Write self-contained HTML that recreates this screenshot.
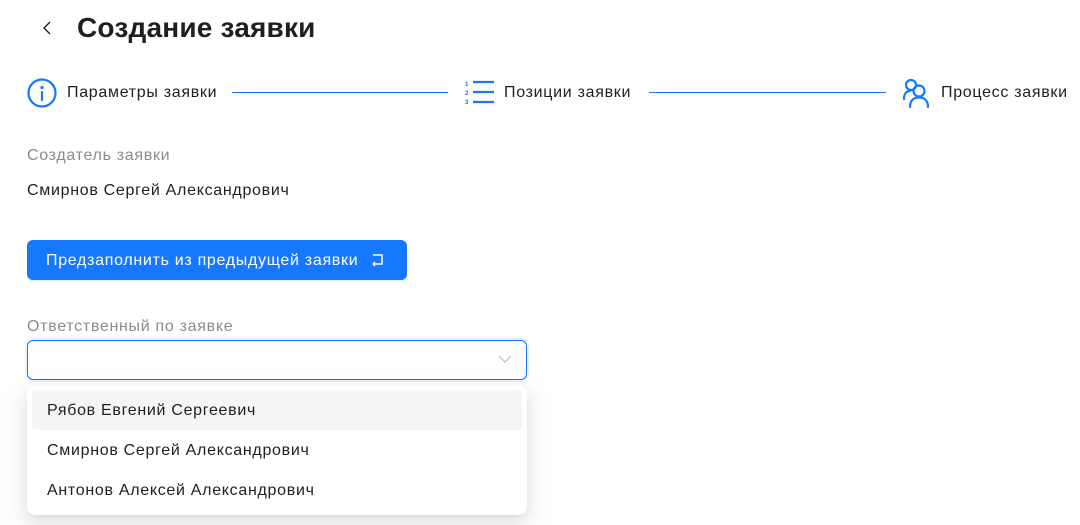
<!DOCTYPE html>
<html><head><meta charset="utf-8"><style>
*{box-sizing:border-box;margin:0;padding:0}
body{width:1080px;height:525px;background:#fff;font-family:"Liberation Sans",sans-serif;color:#1f1f1f;position:relative;overflow:hidden}
.a{position:absolute;white-space:nowrap}
.t16{font-size:16px;letter-spacing:0.7px}
.line{position:absolute;height:1px;background:#1677ff;top:92px}
</style></head><body>
<svg class="a" style="left:40px;top:19px" width="14" height="18" viewBox="0 0 14 18"><path d="M10 3 L4 9 L10 15" fill="none" stroke="#1f1f1f" stroke-width="1.4"/></svg>
<div class="a" style="left:77px;top:12px;font-size:28px;font-weight:bold;color:#1f1f1f;letter-spacing:0.2px">Создание заявки</div>

<svg class="a" style="left:26px;top:77px" width="32" height="32" viewBox="0 0 32 32"><circle cx="16" cy="16" r="13.5" fill="none" stroke="#1677ff" stroke-width="2.2"/><circle cx="16" cy="10.5" r="1.6" fill="#1677ff"/><rect x="14.9" y="14" width="2.2" height="10" rx="1" fill="#1677ff"/></svg>
<div class="a t16" style="left:67px;top:84px">Параметры заявки</div>
<div class="line" style="left:232px;width:216px"></div>

<svg class="a" style="left:462px;top:79px" width="34" height="28" viewBox="0 0 34 28"><g fill="#1677ff" font-size="6" font-weight="bold" font-family="Liberation Sans"><text x="3" y="7">1</text><text x="3" y="16">2</text><text x="3" y="25">3</text></g><g stroke="#1677ff" stroke-width="2.2"><line x1="11" y1="3" x2="32" y2="3"/><line x1="11" y1="13" x2="32" y2="13"/><line x1="11" y1="23" x2="32" y2="23"/></g></svg>
<div class="a t16" style="left:504px;top:84px">Позиции заявки</div>
<div class="line" style="left:649px;width:237px"></div>

<svg class="a" style="left:900px;top:77px" width="32" height="32" viewBox="0 0 32 32"><g fill="none" stroke="#1677ff" stroke-width="2.2" stroke-linecap="round"><circle cx="11" cy="8" r="5"/><path d="M4 22 C4 16 7 14 10 14"/><circle cx="19" cy="14" r="5.5"/><path d="M10 30 C10 23 14 20.5 19 20.5 C24 20.5 28 23 28 30"/></g></svg>
<div class="a t16" style="left:941px;top:84px">Процесс заявки</div>

<div class="a t16" style="left:27px;top:147px;color:#8c8c8c">Создатель заявки</div>
<div class="a t16" style="left:27px;top:182px">Смирнов Сергей Александрович</div>

<div class="a" style="left:27px;top:240px;width:380px;height:40px;background:#1677ff;border-radius:6px;box-shadow:0 2px 0 rgba(5,145,255,.1)"></div>
<div class="a t16" style="left:46px;top:252px;color:#fff">Предзаполнить из предыдущей заявки</div>
<svg class="a" style="left:370px;top:252px" width="16" height="16" viewBox="0 0 16 16"><path d="M3 3 H12 V12 H3 M3 12 L5 10 M3 12 L5 14" fill="none" stroke="#fff" stroke-width="1.5"/></svg>

<div class="a t16" style="left:27px;top:318px;color:#8c8c8c">Ответственный по заявке</div>
<div class="a" style="left:27px;top:340px;width:500px;height:40px;border:1px solid #1677ff;border-radius:6px;box-shadow:0 0 0 2px rgba(5,145,255,.1)"></div>
<svg class="a" style="left:497px;top:352px" width="16" height="14" viewBox="0 0 16 14"><path d="M2 4 L8 10 L14 4" fill="none" stroke="#bfbfbf" stroke-width="1.2"/></svg>

<div class="a" style="left:27px;top:386px;width:500px;height:129px;background:#fff;border-radius:8px;box-shadow:0 6px 16px rgba(0,0,0,.08),0 3px 6px -4px rgba(0,0,0,.12),0 9px 28px 8px rgba(0,0,0,.05)"></div>
<div class="a" style="left:32px;top:390px;width:490px;height:40px;background:#f5f5f5;border-radius:4px"></div>
<div class="a t16" style="left:47px;top:402px">Рябов Евгений Сергеевич</div>
<div class="a t16" style="left:47px;top:442px">Смирнов Сергей Александрович</div>
<div class="a t16" style="left:47px;top:482px">Антонов Алексей Александрович</div>
</body></html>
